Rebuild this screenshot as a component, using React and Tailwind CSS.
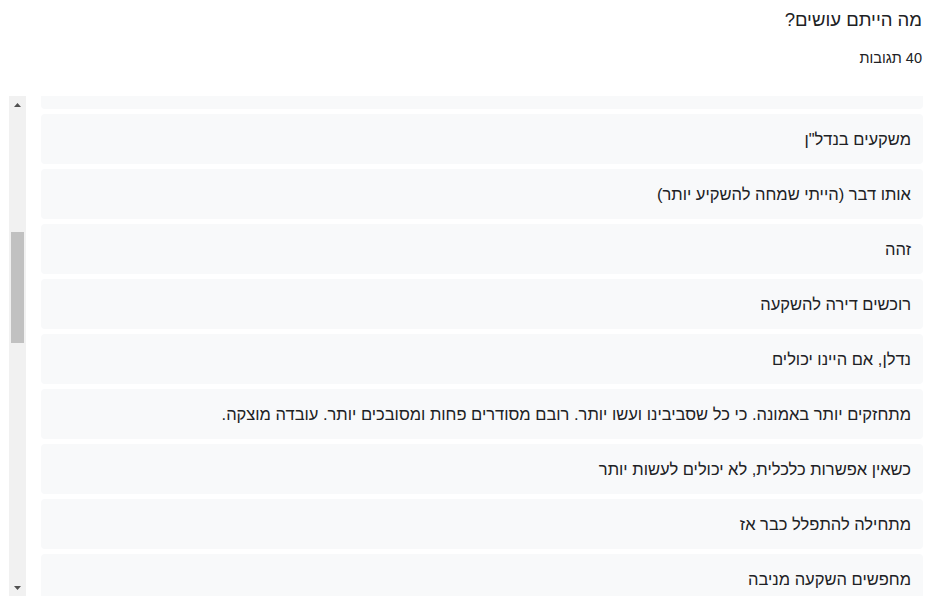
import { useEffect, useRef } from "react";

const ANSWERS = [
  "חוסכים יותר",
  "קונים דירה",
  "משקיעים בבורסה",
  "לא יודעים",
  "אותו דבר",
  "חוסכים לילדים",
  "מטיילים יותר",
  "משקיעים בעסק",
  "עוזרים להורים",
  "קרן השתלמות",
  "משקעים בנדל\"ן",
  "אותו דבר (הייתי שמחה להשקיע יותר)",
  "זהה",
  "רוכשים דירה להשקעה",
  "נדלן, אם היינו יכולים",
  "מתחזקים יותר באמונה. כי כל שסביבינו ועשו יותר. רובם מסודרים פחות ומסובכים יותר. עובדה מוצקה.",
  "כשאין אפשרות כלכלית, לא יכולים לעשות יותר",
  "מתחילה להתפלל כבר אז",
  "מחפשים השקעה מניבה",
  "חוסכים",
  "משלמים משכנתא",
  "אותו הדבר",
  "משקיעים בחינוך",
  "קונים רכב",
  "פותחים עסק",
  "חוסכים לפנסיה",
  "משקיעים בקרנות",
  "לא משנים כלום",
  "תורמים לצדקה",
  "משפצים את הבית",
  "משקיעים בנדל\"ן בחו\"ל",
  "חוסכים בבנק",
  "קונים זהב",
  "משקיעים במניות",
  "מתכננים יותר",
  "חוסכים לחתונה",
  "עוברים דירה",
  "לא בטוחה",
];

function ScrollArrow({ down }) {
  return (
    <div className="h-[17px] flex items-center justify-center">
      <svg width="7" height="4" viewBox="0 0 7 4" className={down ? "rotate-180" : ""}>
        <polygon points="3.5,0 7,4 0,4" fill="#505050" />
      </svg>
    </div>
  );
}

export default function App() {
  const listRef = useRef(null);

  useEffect(() => {
    if (listRef.current) listRef.current.scrollTop = 536;
  }, []);

  return (
    <div
      dir="rtl"
      className="w-[935px] h-[610px] bg-white text-[#202124] overflow-hidden pr-[12px] pl-[9px]"
      style={{ fontFamily: '"Liberation Sans", Arial, sans-serif' }}
    >
      <div className="pt-[8px] pr-[1px]">
        <h1 className="text-[18.5px] leading-[24px] font-normal">מה הייתם עושים?</h1>
        <p className="mt-[18px] text-[14.5px] leading-[16px]">40 תגובות</p>
      </div>

      <div className="mt-[30px] h-[500px] flex gap-[15px]">
        {/* answers */}
        <div ref={listRef} className="flex-1 h-full overflow-y-scroll [scrollbar-width:none]">
          <div className="flex flex-col gap-[5px] pt-[4px] pb-[10px]">
            {ANSWERS.map((a, i) => (
              <div
                key={i}
                className="h-[50px] shrink-0 rounded-[4px] bg-[#f8f9fa] px-[12px] flex items-center text-[16.5px] leading-[20px] whitespace-nowrap"
              >
                {a}
              </div>
            ))}
          </div>
        </div>

        {/* scrollbar */}
        <div className="w-[17px] h-full bg-[#f1f1f1] flex flex-col shrink-0">
          <ScrollArrow />
          <div className="flex-1 px-[2px] flex flex-col">
            <div className="h-[119px]" />
            <div className="h-[111px] bg-[#c1c1c1]" />
          </div>
          <ScrollArrow down />
        </div>
      </div>
    </div>
  );
}
